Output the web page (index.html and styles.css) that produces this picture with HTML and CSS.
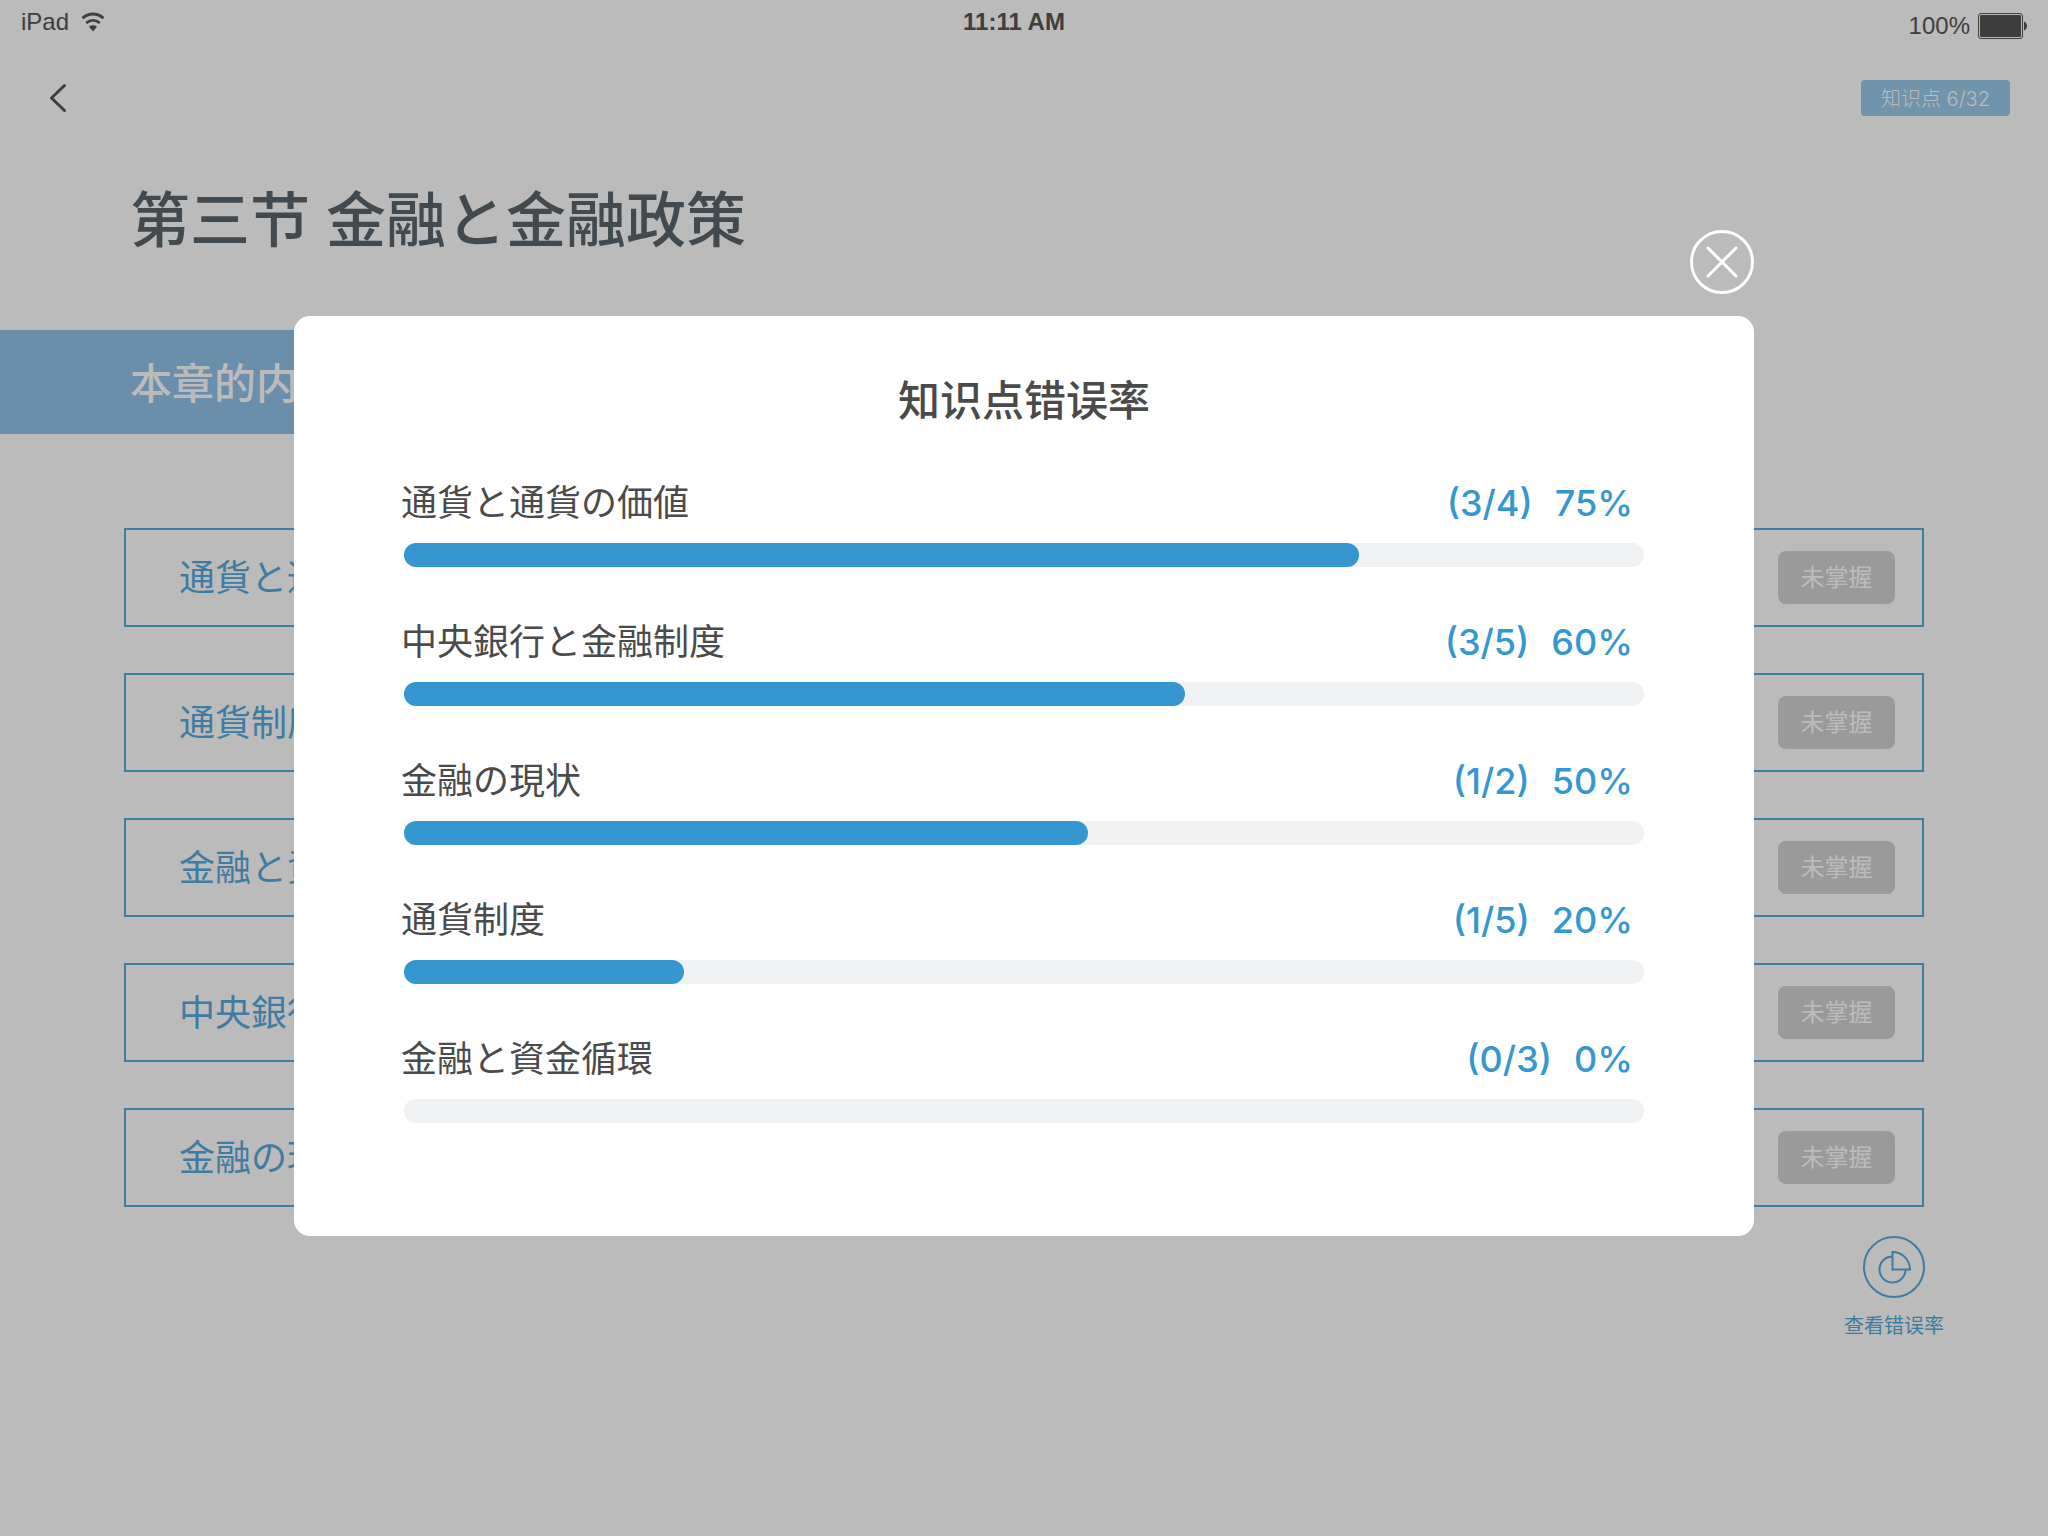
FILE: index.html
```html
<!DOCTYPE html>
<html lang="zh-CN">
<head>
<meta charset="utf-8">
<meta name="viewport" content="width=device-width, initial-scale=1">
<title>知识点错误率</title>
<link rel="stylesheet" href="styles.css">
</head>
<body>
<div class="page">
  <div class="status">
    <div class="status-left">
      <span>iPad</span>
      <svg class="wifi" viewBox="0 0 24 20" width="24" height="20" aria-hidden="true">
        <path d="M1.500 6.200C7.500 .6 16.500 .6 22.500 6.200M5.200 11C9.300 7.400 14.700 7.400 18.800 11" fill="none" stroke="currentColor" stroke-width="2.800"/>
        <path d="M8 14.800C10.300 12.800 13.700 12.800 16 14.800L12 19.400Z" fill="currentColor"/>
      </svg>
    </div>
    <div class="status-time">11:11 AM</div>
    <div class="status-right">
      <span>100%</span>
      <svg viewBox="0 0 49 26" width="49" height="26" aria-hidden="true">
        <rect x=".5" y=".5" width="44" height="25" rx="2.500" fill="none" stroke="currentColor"/>
        <rect x="2" y="2" width="41" height="22" rx="1" fill="currentColor"/>
        <path d="M46 8.500C50 10 50 16 46 17.500Z" fill="currentColor"/>
      </svg>
    </div>
  </div>

  <header class="nav">
    <button class="back" type="button" aria-label="返回">
      <svg viewBox="0 0 18 30" width="18" height="30" aria-hidden="true">
        <path d="M15.500 2.500L2.500 15L15.500 27.500" fill="none" stroke="currentColor" stroke-width="3" stroke-linecap="round" stroke-linejoin="round"/>
      </svg>
    </button>
    <span class="counter">知识点 6/32</span>
  </header>

  <main>
    <h1 class="title">第三节 金融と金融政策</h1>
    <h2 class="banner">本章的内容</h2>
    <ul class="topics">
      <li class="topic"><span>通貨と通貨の価値</span><button class="mastery" type="button">未掌握</button></li>
      <li class="topic"><span>通貨制度</span><button class="mastery" type="button">未掌握</button></li>
      <li class="topic"><span>金融と資金循環</span><button class="mastery" type="button">未掌握</button></li>
      <li class="topic"><span>中央銀行と金融制度</span><button class="mastery" type="button">未掌握</button></li>
      <li class="topic"><span>金融の現状</span><button class="mastery" type="button">未掌握</button></li>
    </ul>
    <div class="actions">
      <a class="rates-link" href="#rates">
        <svg viewBox="0 0 62 62" width="62" height="62" fill="none" stroke="currentColor" stroke-width="2" aria-hidden="true">
          <circle cx="31" cy="31" r="30"/>
          <path d="M29.500 20.500A13 13 0 1 0 42.500 33.500M29.500 16V33.500H47A17.500 17.500 0 0 0 29.500 16Z"/>
        </svg>
        <span>查看错误率</span>
      </a>
    </div>
  </main>
</div>

<div class="overlay">
  <div class="dialog" id="rates" role="dialog" aria-modal="true" aria-labelledby="rates-title">
    <button class="close" type="button" aria-label="关闭">
      <svg viewBox="0 0 64 64" width="64" height="64" fill="none" stroke="currentColor" stroke-width="3" stroke-linecap="round" aria-hidden="true">
        <circle cx="32" cy="32" r="30.500"/>
        <path d="M18 18L46 46M46 18L18 46"/>
      </svg>
    </button>
    <section class="panel">
      <h2 class="panel-title" id="rates-title">知识点错误率</h2>
      <ul class="rates">
        <li class="rate">
          <div class="rate-head"><span id="r1">通貨と通貨の価値</span><span class="value"><span>(3/4)</span><span>75%</span></span></div>
          <div class="track" role="progressbar" aria-labelledby="r1" aria-valuenow="75"><div class="fill" style="width:77%"></div></div>
        </li>
        <li class="rate">
          <div class="rate-head"><span id="r2">中央銀行と金融制度</span><span class="value"><span>(3/5)</span><span>60%</span></span></div>
          <div class="track" role="progressbar" aria-labelledby="r2" aria-valuenow="60"><div class="fill" style="width:63%"></div></div>
        </li>
        <li class="rate">
          <div class="rate-head"><span id="r3">金融の現状</span><span class="value"><span>(1/2)</span><span>50%</span></span></div>
          <div class="track" role="progressbar" aria-labelledby="r3" aria-valuenow="50"><div class="fill" style="width:55.2%"></div></div>
        </li>
        <li class="rate">
          <div class="rate-head"><span id="r4">通貨制度</span><span class="value"><span>(1/5)</span><span>20%</span></span></div>
          <div class="track" role="progressbar" aria-labelledby="r4" aria-valuenow="20"><div class="fill" style="width:22.6%"></div></div>
        </li>
        <li class="rate">
          <div class="rate-head"><span id="r5">金融と資金循環</span><span class="value"><span>(0/3)</span><span>0%</span></span></div>
          <div class="track" role="progressbar" aria-labelledby="r5" aria-valuenow="0"><div class="fill" style="width:0%"></div></div>
        </li>
      </ul>
    </section>
  </div>
</div>
</body>
</html>
```
FILE: styles.css
```css
* {
  box-sizing: border-box;
}

body {
  margin: 0;
  background: #fff;
  color: #575555;
  font-family: Inter, "Noto Sans CJK SC", "Noto Sans CJK JP", sans-serif;
}

h1, h2, ul {
  margin: 0;
  padding: 0;
  font-weight: 500;
  list-style: none;
}

button {
  border: 0;
  padding: 0;
  background: none;
  color: inherit;
  font: inherit;
}

svg {
  display: block;
}

.page {
  min-height: 100vh;
}

/* Status bar */
.status {
  display: grid;
  grid-template-columns: 1fr auto 1fr;
  align-items: start;
  height: 50px;
  padding: 0 21px;
  font-family: "Liberation Sans", Arial, sans-serif;
  font-size: 24px;
  line-height: 44px;
}

.status-left,
.status-right {
  display: flex;
  align-items: center;
}

.status-left {
  gap: 12px;
}

.status-time {
  padding-right: 20px;
  font-weight: 700;
}

.status-right {
  justify-content: flex-end;
  gap: 8px;
  line-height: 52px;
}

/* Navigation */
.nav {
  display: flex;
  align-items: center;
  justify-content: space-between;
  height: 36px;
  margin: 30px 38px 0 49px;
}

.counter {
  padding: 2px 20px 0;
  border-radius: 4px;
  background: #99cae8;
  color: #fff;
  font-size: 20px;
  font-weight: 300;
  line-height: 34px;
}

/* Chapter */
.title {
  margin: 68px 130px 74px;
  color: #5a666d;
  font-size: 60px;
  line-height: 72px;
}

.banner {
  width: 50%;
  padding: 4px 130px 0;
  background: #92c2e8;
  color: #fff;
  font-size: 42px;
  line-height: 100px;
}

.topics {
  display: grid;
  gap: 46px;
  margin: 94px 124px 29px;
  font-weight: 400;
}

.topic {
  display: flex;
  align-items: center;
  justify-content: space-between;
  height: 99px;
  padding: 0 27px 0 53px;
  border: 2px solid #56aadc;
  color: #56aadc;
  font-size: 36px;
  line-height: 44px;
}

.mastery {
  width: 117px;
  height: 53px;
  border-radius: 8px;
  background: #d3d3d3;
  color: #fff;
  font-size: 24px;
}

.actions {
  display: flex;
  justify-content: flex-end;
  padding-right: 104px;
}

.rates-link {
  display: flex;
  flex-direction: column;
  align-items: center;
  gap: 14px;
  color: #56aadc;
  font-size: 20px;
  line-height: 28px;
  text-decoration: none;
}

/* Dialog */
.overlay {
  position: fixed;
  inset: 0;
  display: flex;
  align-items: flex-start;
  justify-content: center;
  padding: 230px 24px 24px;
  overflow: auto;
  background: rgba(0, 0, 0, 0.267);
}

.dialog {
  display: flex;
  flex-direction: column;
  gap: 22px;
  width: 100%;
  max-width: 1460px;
}

.close {
  align-self: flex-end;
  color: #fff;
}

.panel {
  padding: 55px 107px 113px;
  border-radius: 16px;
  background: #fff;
  color: #4a4a4a;
}

.panel-title {
  margin-bottom: 50px;
  font-size: 42px;
  line-height: 60px;
  text-align: center;
}

.rates {
  display: grid;
  gap: 53px;
}

.rate {
  display: grid;
  gap: 18px;
}

.rate-head {
  display: flex;
  justify-content: space-between;
  padding-right: 14px;
  font-size: 36px;
  font-weight: 400;
  line-height: 44px;
}

.value {
  display: flex;
  gap: 22px;
  color: #3597d0;
  font-weight: 500;
}

.track {
  height: 24px;
  margin: 0 3px;
  border-radius: 12px;
  background: #f0f1f3;
}

.fill {
  height: 100%;
  border-radius: 12px;
  background: #3597d0;
}
```
